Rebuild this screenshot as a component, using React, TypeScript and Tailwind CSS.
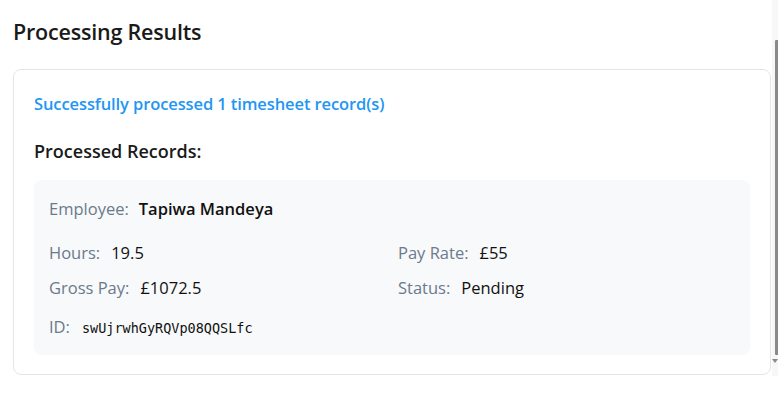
import React from 'react';

interface Field {
  label: string;
  value: string;
}

const record = {
  employee: 'Tapiwa Mandeya',
  id: 'swUjrwhGyRQVp08QQSLfc',
  fields: [
    { label: 'Hours', value: '19.5' },
    { label: 'Pay Rate', value: '£55' },
    { label: 'Gross Pay', value: '£1072.5' },
    { label: 'Status', value: 'Pending' },
  ] as Field[],
};

function Row({ label, value }: Field) {
  return (
    <div className="flex items-baseline gap-[11px] text-[16.5px] leading-[24px]">
      <span className="text-[#6b7a8c]">{label}:</span>
      <span className="text-[#111]">{value}</span>
    </div>
  );
}

export default function App() {
  return (
    <div className="flex w-[778px] h-[409px] bg-white" style={{ fontFamily: '"Open Sans", "Noto Sans", sans-serif' }}>
      <div className="flex-1 pl-[13px] pr-[1px] pt-[16px]">
        <h2 className="text-[21.5px] leading-[32px] font-semibold text-[#1a1a1a] tracking-[-0.2px]">Processing Results</h2>

        <div className="mt-[21px] rounded-[8px] border border-[#e3e5ec] px-[20px] pt-[20px] pb-[19px]">
          <p className="text-[16.5px] leading-[28px] text-[#2196f3] font-semibold tracking-[-0.1px]">
            Successfully processed 1 timesheet record(s)
          </p>

          <h3 className="mt-[19px] text-[18px] leading-[28px] font-semibold text-[#1a1a1a]">Processed Records:</h3>

          <div className="mt-[15px] rounded-[8px] bg-[#f8f9fa] px-[15px] pt-[17px] pb-[15px]">
            <div className="flex items-baseline gap-[10px] text-[16.5px] leading-[24px]">
              <span className="text-[#6b7a8c]">Employee:</span>
              <span className="text-[#111] font-semibold">{record.employee}</span>
            </div>

            <div className="mt-[20px] grid grid-cols-2 gap-x-[12px] gap-y-[11px]">
              {record.fields.map(f => (
                <Row key={f.label} label={f.label} value={f.value} />
              ))}
            </div>

            <div className="mt-[15px] flex items-baseline gap-[12px] leading-[24px]">
              <span className="text-[16.5px] text-[#6b7a8c]">ID:</span>
              <span className="text-[13.5px] text-[#111]" style={{ fontFamily: '"DejaVu Sans Mono", monospace' }}>
                {record.id}
              </span>
            </div>
          </div>
        </div>
      </div>

      {/* scrollbar strip */}
      <div className="w-[6px] h-[376px] bg-[#f7f7f7] flex flex-col items-end pt-[40px]">
        <div className="w-[3px] h-[315px] bg-[#8a8a8a] rounded-l-[1px]" />
        <div className="mt-[4px] w-0 h-0 border-l-[3px] border-r-[3px] border-t-[4px] border-l-transparent border-r-transparent border-t-[#8a8a8a]" />
      </div>
    </div>
  );
}
